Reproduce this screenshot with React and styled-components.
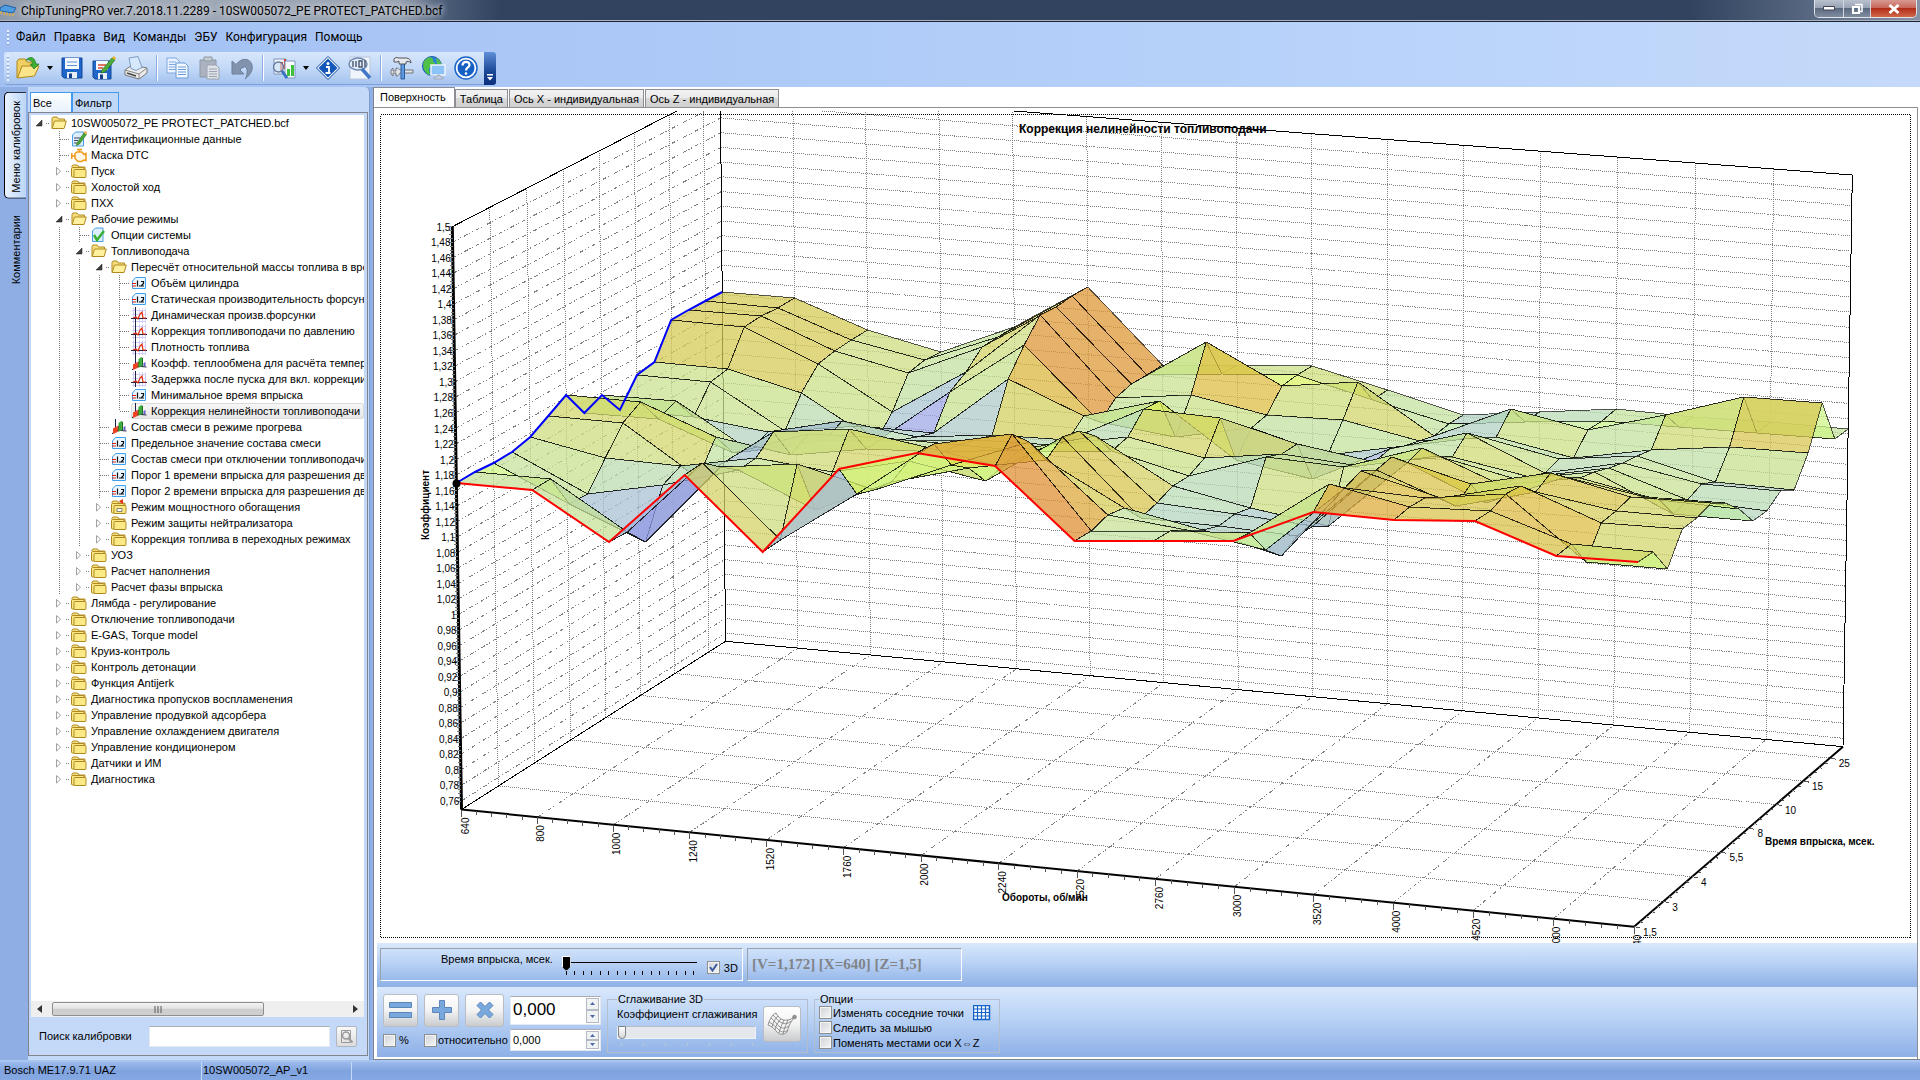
import React, { useState } from "react";
import styled, { createGlobalStyle, css } from "styled-components";

const UI_FONT = `"Liberation Sans", Arial, sans-serif`;
const MENU_FONT = `Roboto, "Noto Sans", sans-serif`;

const GlobalStyle = createGlobalStyle`
    * { box-sizing: border-box; }
    body {
        margin: 0;
        background: #8eb0e6;
        font-family: ${UI_FONT};
        font-size: 11px;
        color: #000;
    }
    button, input { font-family: inherit; font-size: inherit; color: inherit; }
`;

/* ---------- window frame ---------- */

const Window = styled.div`
    display: flex;
    flex-direction: column;
    min-height: 100vh;
`;

const TitleBar = styled.header`
    display: flex;
    align-items: flex-start;
    justify-content: space-between;
    height: 22px;
    background: linear-gradient(90deg, #8e99aa 0, #a3abb8 60px, #98a2b1 400px, #4b5c77 445px, #31435f 500px, #31435f 88%, #566680 94%, #8792a5 100%);
    border-bottom: 1px solid #1c2434;
    box-shadow: inset 0 -1px 0 #a9b2c2;
    overflow: hidden;
`;

const Caption = styled.h1`
    display: flex;
    align-items: center;
    gap: 5px;
    margin: 0;
    height: 21px;
    font-family: ${MENU_FONT};
    font-size: 12px;
    font-weight: normal;
    white-space: nowrap;
    text-shadow: 0 0 6px #d5d9e0, 0 0 6px #d5d9e0;
`;

const Controls = styled.div`
    display: flex;
    margin-right: 3px;
    border: 1px solid #dfe3ea;
    border-top: 0;
    border-radius: 0 0 5px 5px;
    overflow: hidden;
`;

const ControlButton = styled.button`
    display: flex;
    align-items: center;
    justify-content: center;
    width: ${(p) => p.$width}px;
    height: 17px;
    padding: 0;
    border: 0;
    border-left: ${(p) => (p.$first ? "0" : "1px solid #d3d8e0")};
    background: ${(p) => p.$close
        ? "linear-gradient(#d79a92 0, #c8685a 45%, #b22d18 50%, #d0684c 100%)"
        : "linear-gradient(#b9c1ce 0, #98a3b4 45%, #5c6a80 50%, #7f8ca0 100%)"};
`;

const Bars = styled.div`
    background: linear-gradient(90deg, #a2c0f4 0, #aecaf7 40%, #b9d3fa 72%, #c5dafa 100%);
    padding: 0 4px 2px;
`;

const MenuBar = styled.nav`
    display: flex;
    align-items: center;
    gap: 8px;
    height: 30px;
    padding-left: 3px;
    font-family: ${MENU_FONT};
    font-size: 12px;
`;

const MenuLink = styled.a`
    color: #000;
    text-decoration: none;
`;

const Grip = styled.span`
    width: 2px;
    height: ${(p) => p.$height}px;
    margin-right: ${(p) => p.$gap}px;
    background: repeating-linear-gradient(#eef4ff 0, #eef4ff 2px, #86a2d4 2px, #86a2d4 3px, transparent 3px, transparent 4px);
`;

const ToolBar = styled.div`
    display: inline-flex;
    align-items: center;
    height: 33px;
    padding-left: 3px;
    border-radius: 3px;
    background: linear-gradient(#d7e6fb 0, #c3d9f8 50%, #a5c3ee 100%);
    border-bottom: 1px solid #7f9fd6;
`;

const ToolButton = styled.button`
    display: flex;
    align-items: center;
    justify-content: center;
    width: ${(p) => (p.$narrow ? 12 : 32)}px;
    height: 30px;
    padding: 0;
    border: 0;
    background: none;
`;

const ToolSeparator = styled.span`
    width: 2px;
    height: 26px;
    margin: 0 4px;
    border-left: 1px solid #8caee2;
    border-right: 1px solid #fff;
`;

const ToolEnd = styled.button`
    display: flex;
    align-items: flex-end;
    justify-content: center;
    width: 12px;
    height: 33px;
    margin-left: 2px;
    padding: 0 0 4px;
    border: 0;
    border-radius: 0 3px 3px 0;
    background: linear-gradient(#5f8fd8, #1a4796 60%, #0b2f7c);
`;

/* ---------- main area ---------- */

const Main = styled.main`
    display: flex;
    flex: 1;
    align-items: stretch;
`;

const SideStrip = styled.div`
    display: flex;
    flex-direction: column;
    gap: 8px;
    width: 28px;
    padding: 5px 2px 0 4px;
    background: #8eaee4;
`;

const SideTab = styled.button`
    writing-mode: vertical-rl;
    transform: rotate(180deg);
    padding: 5px 3px 8px 2px;
    border: 0;
    text-align: left;
    white-space: nowrap;
    background: none;
    ${(p) => p.$active && css`
        background: linear-gradient(270deg, #eaf3fe, #bcd5f6);
        border: 1px solid #000;
        border-left: 0;
        border-radius: 0 5px 5px 0;
    `}
`;

const LeftPane = styled.section`
    display: flex;
    flex-direction: column;
    flex: 0 0 342px;
    min-width: 0;
    padding: 5px 1px 4px 0;
    background: #c4d9f8;
    border-radius: 0 5px 0 0;
    border-right: 1px solid #7f9bcb;
`;

const FilterTabs = styled.div`
    display: flex;
    height: 20px;
    padding-left: 2px;
`;

const FilterTab = styled.button`
    width: ${(p) => p.$width}px;
    padding: 0 2px;
    border: 1px solid #4299ee;
    border-bottom: 0;
    text-align: left;
    background: ${(p) => (p.$active ? "linear-gradient(#fff, #e8f1fc)" : "#c0d8f8")};
`;

const TreePanel = styled.div`
    display: flex;
    flex-direction: column;
    flex: 1;
    min-width: 0;
    border: 1px solid #80848c;
`;

const Tree = styled.ul`
    flex: 1;
    margin: 2px 3px 0 2px;
    padding: 0;
    list-style: none;
    background: #fff;
    overflow: hidden;
`;

const TreeRow = styled.li`
    display: flex;
    align-items: stretch;
    height: 16px;
    white-space: nowrap;
`;

const DOTS_V = "repeating-linear-gradient(#777 0, #777 1px, transparent 1px, transparent 2px)";
const DOTS_H = "repeating-linear-gradient(90deg, #777 0, #777 1px, transparent 1px, transparent 2px)";

const Blank = styled.span`
    flex: 0 0 20px;
`;

const Guide = styled.span`
    flex: 0 0 20px;
    background: ${DOTS_V} 8px 0 / 1px 100% no-repeat;
`;

const LeafGuide = styled.span`
    flex: 0 0 20px;
    background:
        ${DOTS_V} 8px 0 / 1px ${(p) => (p.$last ? "8px" : "100%")} no-repeat,
        ${DOTS_H} 9px 8px / 10px 1px no-repeat;
`;

const Expander = styled.button`
    display: flex;
    align-items: center;
    flex: 0 0 20px;
    padding: 0 0 0 5px;
    border: 0;
    background: ${DOTS_H} 15px 8px / 4px 1px no-repeat;
`;

const TreeLabel = styled.span`
    display: flex;
    align-items: center;
    gap: 4px;
    flex: 1 0 auto;
    ${(p) => p.$selected && css`
        background: linear-gradient(#f8f8f8, #e6e6e6);
        box-shadow: inset 0 0 0 1px #dadada;
        border-radius: 3px;
    `}
`;

const HScroll = styled.div`
    display: flex;
    align-items: center;
    height: 16px;
    margin: 0 3px 0 2px;
    padding: 0 6px;
    gap: 10px;
    background: #efefef;
`;

const ScrollThumb = styled.div`
    display: flex;
    align-items: center;
    justify-content: center;
    width: 66%;
    height: 14px;
    margin-right: auto;
    border: 1px solid #8f8f8f;
    border-radius: 2px;
    background: linear-gradient(#f3f3f3 0, #e2e2e2 45%, #cdcdcd 50%, #d0d0d0 100%);
`;

const SearchRow = styled.div`
    display: flex;
    align-items: center;
    height: 38px;
    padding: 0 10px;
    gap: 6px;
`;

const SearchLabel = styled.label`
    flex: 0 0 104px;
    white-space: nowrap;
`;

const SearchInput = styled.input`
    flex: 1;
    min-width: 0;
    height: 21px;
    border: 1px solid #e3e9ef;
    border-top-color: #abadb3;
    background: #fff;
`;

const SearchButton = styled.button`
    display: flex;
    align-items: center;
    justify-content: center;
    width: 21px;
    height: 21px;
    padding: 0;
    border: 1px solid #b0b6be;
    border-radius: 2px;
    background: linear-gradient(#fafafa, #dcdcdc);
`;

const RightPane = styled.section`
    display: flex;
    flex-direction: column;
    flex: 1;
    min-width: 0;
    margin-left: 3px;
    border-left: 1px solid #80848c;
    border-bottom: 1px solid #80848c;
    background: #fff;
`;

const PageTabs = styled.div`
    display: flex;
    align-items: flex-end;
    height: 21px;
`;

const PageTab = styled.button`
    height: 19px;
    padding: 0 4px;
    border: 1px solid #8c8e94;
    border-left-width: ${(p) => (p.$active ? 0 : 1)}px;
    background: linear-gradient(#f2f2f2 0, #ebebeb 50%, #dadada 50%, #cfcfcf 100%);
    white-space: nowrap;
    margin-right: 1px;
    ${(p) => p.$active && css`
        align-self: stretch;
        height: 21px;
        padding: 0 8px 2px 6px;
        margin-right: 0;
        border-bottom-color: #fff;
        background: #fff;
    `}
`;

const Page = styled.div`
    display: flex;
    flex-direction: column;
    flex: 1;
    margin-right: 2px;
    padding: 3px 0 2px 3px;
    border-top: 1px solid #8c8e94;
    border-right: 1px solid #8c8e94;
    margin-top: -1px;
`;

const ChartSvg = styled.svg`
    display: block;
    width: 100%;
    height: auto;
    background: #fff;
    font-size: 10px;
`;

const Band = styled.div`
    display: flex;
    align-items: flex-start;
    gap: ${(p) => p.$gap}px;
    min-height: ${(p) => p.$height}px;
    flex: ${(p) => (p.$grow ? 1 : "0 0 auto")};
    padding: ${(p) => p.$pad};
    background: linear-gradient(#d9e8fc 0, #b9d2f5 45%, #8db0e6 100%);
`;

const Bevel = styled.div`
    display: flex;
    align-items: ${(p) => p.$align};
    height: 33px;
    width: ${(p) => p.$width}px;
    padding: ${(p) => p.$pad};
    border: 1px solid;
    border-color: #98a0ac #fff #fff #98a0ac;
`;

const Readout = styled.output`
    font-family: "Liberation Serif", "Times New Roman", serif;
    font-size: 15px;
    font-weight: bold;
    color: #808488;
    white-space: pre;
`;

const ZLabel = styled.label`
    flex: 0 0 110px;
    line-height: 14px;
    white-space: nowrap;
`;

const ZSliderBox = styled.div`
    display: flex;
    flex-direction: column;
    width: 137px;
    margin: 4px 8px 0 9px;
`;

const ZSlider = styled.input`
    appearance: none;
    width: 100%;
    height: 15px;
    margin: 0;
    background: linear-gradient(#000, #000) 5px 6px / 130px 1px no-repeat;
    &::-webkit-slider-thumb {
        appearance: none;
        width: 9px;
        height: 15px;
        background: #000;
        border: 1px solid #fff;
        clip-path: polygon(0 0, 100% 0, 100% 70%, 50% 100%, 0 70%);
    }
`;

const CheckLabel = styled.label`
    display: flex;
    align-items: center;
    gap: ${(p) => p.$gap || 1}px;
    height: 15px;
    margin-top: ${(p) => p.$top || 0}px;
    white-space: nowrap;
`;

const Check = styled.input`
    appearance: none;
    flex: 0 0 13px;
    width: 13px;
    height: 13px;
    margin: 0;
    border: 1px solid #8e8f8f;
    background: linear-gradient(135deg, #cfd3d8, #f6f6f6);
    box-shadow: inset 0 0 0 1px #f4f4f4;
    &:checked {
        background: url("data:image/svg+xml,%3Csvg xmlns='http://www.w3.org/2000/svg' viewBox='0 0 11 11'%3E%3Cpath d='M2 5l2.5 3.5L9 2' fill='none' stroke='%233c5a9c' stroke-width='2'/%3E%3C/svg%3E"), linear-gradient(135deg, #cfd3d8, #f6f6f6);
    }
`;

const EditGrid = styled.div`
    display: grid;
    grid-template-columns: 35px 35px 39px 91px;
    grid-template-rows: 34px 22px;
    gap: 2px 6px;
    align-items: center;
`;

const BigButton = styled.button`
    display: flex;
    align-items: center;
    justify-content: center;
    width: 100%;
    height: ${(p) => p.$height || 33}px;
    padding: 0;
    border: 1px solid #b9bcc2;
    border-radius: 3px;
    background: linear-gradient(#fff 0, #f3f3f3 50%, #c9cbce 100%);
`;

const WideCheck = styled(CheckLabel)`
    grid-column: 2 / 4;
`;

const SpinBox = styled.div`
    display: flex;
    align-items: stretch;
    height: ${(p) => p.$height}px;
    padding: 1px;
    border: 1px solid #e3e9ef;
    border-top-color: #abadb3;
    background: #fff;
`;

const SpinInput = styled.input`
    flex: 1;
    min-width: 0;
    padding: 0 1px;
    border: 0;
    background: none;
    font-size: ${(p) => p.$size}px;
`;

const SpinButtons = styled.div`
    display: flex;
    flex-direction: column;
    width: 13px;
`;

const SpinButton = styled.button`
    display: flex;
    align-items: center;
    justify-content: center;
    flex: 1;
    min-height: 0;
    padding: 0;
    border: 1px solid #b4bac4;
    background: #f1f2f4;
`;

const Group = styled.fieldset`
    display: flex;
    align-items: flex-start;
    gap: 6px;
    width: ${(p) => p.$width}px;
    min-width: 0;
    height: 60px;
    margin: 0;
    padding: ${(p) => p.$pad};
    border: 1px solid #b4bfcd;
`;

const Legend = styled.legend`
    padding: 0 1px;
    line-height: 12px;
`;

const Column = styled.div`
    display: flex;
    flex-direction: column;
    flex: 1;
    min-width: 0;
`;

const SmoothLabel = styled.label`
    line-height: 16px;
    margin-bottom: 4px;
    white-space: nowrap;
`;

const SmoothSlider = styled.input`
    appearance: none;
    width: 139px;
    height: 13px;
    margin: 0;
    border: 1px solid #eef1f5;
    border-top-color: #b5bcc6;
    background: #e4e8ec;
    &::-webkit-slider-thumb {
        appearance: none;
        width: 8px;
        height: 13px;
        border: 1px solid #7e8288;
        border-radius: 1px 1px 4px 4px;
        background: linear-gradient(#fff, #d8d8d8);
    }
`;

const MeshCell = styled.div`
    flex: 0 0 38px;
`;

const StatusBar = styled.footer`
    display: flex;
    height: 20px;
    border-top: 2px solid #a8c4f0;
    background: linear-gradient(#9cbaec 0, #7fa3df 50%, #86a9e3 100%);
    line-height: 17px;
`;

const StatusCell = styled.span`
    width: ${(p) => p.$width}px;
    padding-left: ${(p) => p.$pad}px;
    border-right: 1px solid #c5d8f6;
    white-space: nowrap;
`;

/* ---------- tree icons ---------- */

function TreeIcon({ kind }) {
    const box = { width: 16, height: 16, viewBox: "0 0 16 16", "aria-hidden": true };
    if (kind === "open") {
        return (
            <svg {...box}>
                <path d="M1 13.500V3.500l1-1.500h4l1.500 2H13.500V6" fill="#f6df7c" stroke="#b08a20" />
                <path d="M1.200 13.500L3.500 6h11.800l-2.200 7.500z" fill="#fff0a0" stroke="#b08a20" />
            </svg>
        );
    }
    if (kind === "folder" || kind === "marked") {
        return (
            <svg {...box}>
                <path d="M.500 4l1.500-2h4.500l1.500 2h6v3" fill="#f6e07c" stroke="#b08a20" />
                <rect x=".500" y="4.500" width="12.500" height="9.500" rx="1" fill="#f8e684" stroke="#b08a20" />
                <rect x="3" y="6.500" width="12" height="8" rx="1" fill="#fbe985" stroke="#b08a20" />
                {kind === "marked" && <path d="M6 9.500h5v3H6z" fill="#fff" stroke="#555" strokeWidth=".7" />}
                {kind === "marked" && <path d="M8 2l4-2v5l-2-1z" fill="#e03a20" />}
            </svg>
        );
    }
    if (kind === "value") {
        return (
            <svg {...box}>
                <path d="M1.500 13.500V6l3-3.500h10v11z" fill="#eaf6ff" stroke="#3fa0ee" />
                <path d="M1 8.500h4M1 11h4" stroke="#e02010" strokeWidth="1.200" />
                <path d="M6.500 5.500v6M8.500 10.500v1M10 6.500h2.500v2l-2.500 2.500h3" fill="none" stroke="#111" strokeWidth="1.200" />
            </svg>
        );
    }
    if (kind === "curve") {
        return (
            <svg {...box}>
                <path d="M1 3.500h14M1 7.500h14M1 14.500h14M2.500 1v15M8.500 1v15M11.500 1v15M14.500 1v15" stroke="#d0d0f8" />
                <path d="M4.500 0v16M0 11.500h16" stroke="#20204a" />
                <path d="M2 11l3-1 2 2 2-5 2-2 1 6h3" fill="none" stroke="#e83010" strokeWidth="1.200" />
            </svg>
        );
    }
    if (kind === "map") {
        return (
            <svg {...box}>
                <path d="M4.500 0v11L1 15M4.500 11l11 1" stroke="#20204a" fill="none" />
                <path d="M2 9.500l4.500-2.500v6L2 15z" fill="#f04020" />
                <path d="M6.500 7v6l1.500-1V6.500z" fill="#a02010" />
                <path d="M7.500 4l3-2v9l-3 2z" fill="#30b030" />
                <path d="M10.500 2l1.500 1v8l-1.500 1z" fill="#187018" />
                <path d="M12.500 8l2-1v4h-2z" fill="#6060c8" />
            </svg>
        );
    }
    if (kind === "check") {
        return (
            <svg {...box}>
                <path d="M1.500 14.500V4l3-3h7.500v13.500z" fill="#dceefc" stroke="#4aa0e8" />
                <path d="M3 8l3 5 7-9" fill="none" stroke="#38b030" strokeWidth="2.500" />
            </svg>
        );
    }
    if (kind === "edit") {
        return (
            <svg {...box}>
                <path d="M1.500 15V4l3-3h8v14z" fill="#dceefc" stroke="#4aa0e8" />
                <path d="M3 7h7M3 9.500h4M3 12h3" stroke="#446" />
                <path d="M6 12l7-10 2.500 1.500L8.500 13l-3 1.500z" fill="#48a838" stroke="#2b6a20" strokeWidth=".6" />
                <path d="M12.500 1.500l3 2 .5-2.500-2-1z" fill="#f0b050" />
            </svg>
        );
    }
    return (
        <svg {...box}>
            <path d="M.800 6v6M1 9h2.500M4 6.500l2-1.500h5l2 2.500 2-1v7l-2-.500-2.500 1.500H7l-3-3zM6 2.500h5M8.500 2.500V5" fill="#fff8e8" stroke="#f09a1a" strokeWidth="1.500" />
        </svg>
    );
}

/* ---------- toolbar icons ---------- */

const ICONS = {
    open: (
        <>
            <path d="M1 22V5l2-2h6l2 3h8v4" fill="#f0cf62" stroke="#b18718" />
            <path d="M1.500 22L6 10h17l-4.500 10z" fill="#fbe48a" stroke="#b18718" />
            <path d="M10 4c5-5 9-2 10 4h3l-5 5-4-5h3c-1-3-3-5-7-4z" fill="#3fae35" stroke="#1d7a1d" strokeWidth=".7" />
        </>
    ),
    save: (
        <>
            <path d="M2 2h20v20H4l-2-2z" fill="#1f66c8" stroke="#0f4799" />
            <path d="M5 2h14v11H5z" fill="#f4f9ff" />
            <path d="M7 6h10M7 9.500h10" stroke="#5a90d8" />
            <path d="M7 16h10v6H7z" fill="#e8eef6" />
            <path d="M9 17.500h3V22H9z" fill="#123f88" />
        </>
    ),
    saveEdit: (
        <>
            <path d="M1 5h18v18H3l-2-2z" fill="#1f66c8" stroke="#0f4799" />
            <path d="M4 5h12v9H4z" fill="#f4f9ff" />
            <path d="M6 9h8M6 12h5" stroke="#d84a30" strokeWidth="1.500" />
            <path d="M6 17h9v6H6z" fill="#e8eef6" />
            <path d="M8 18.500h3V23H8z" fill="#123f88" />
            <path d="M10 14L20 2l3 2-10 12-4 1z" fill="#4fae3b" stroke="#2c6e20" strokeWidth=".7" />
            <path d="M20 2l1.500-2L24 2l-1 2z" fill="#e8b030" />
        </>
    ),
    print: (
        <>
            <path d="M1 14l7-5 15 3v5l-8 6-14-4z" fill="#ececec" stroke="#777" />
            <path d="M1 14l14 4 8-6M15 18v5" fill="none" stroke="#888" />
            <path d="M5 2l9-1.500 4 11-6 3-5-2z" fill="#d6e8fb" stroke="#7f9cc4" />
            <path d="M3 17l9 3" stroke="#444" strokeWidth="1.500" />
        </>
    ),
    copy: (
        <>
            <path d="M1 2h9l3 3v12H1z" fill="#eaf3ff" stroke="#7fa8dc" />
            <path d="M3 6h7M3 8.500h7M3 11h7M3 13.500h7" stroke="#7fa8dc" />
            <path d="M10 7h9l3 3v12H10z" fill="#f4f9ff" stroke="#6b9ad8" />
            <path d="M12 11h8M12 13.500h8M12 16h8M12 18.500h8" stroke="#6b9ad8" />
        </>
    ),
    paste: (
        <>
            <path d="M2 4h16v17H2z" fill="#aab3bf" stroke="#8d97a5" />
            <path d="M6 1h8v4H6z" fill="#c8cdd4" stroke="#8d97a5" />
            <path d="M9 9h9l3 3v11H9z" fill="#dfe3e8" stroke="#9aa3af" />
            <path d="M11 13h8M11 15.500h8M11 18h8M11 20.500h8" stroke="#9aa3af" />
        </>
    ),
    undo: <path d="M2 5v13h12l-4-4c4-5 8-4 7 3 0 3-1 5-2 6 6-5 8-9 7-14-2-7-10-8-16-.500z" fill="#8193ad" stroke="#6d7f9a" />,
    chartSearch: (
        <>
            <path d="M2 3h12v15H2z" fill="#f2f6fc" stroke="#7b94bd" />
            <path d="M8 6h3v9H8zM12 3h2v10h-2z" fill="#e04028" />
            <path d="M13 5h10v17H13z" fill="#f8fbff" stroke="#7b94bd" />
            <path d="M15 13h3v7h-3zM19 9h3v11h-3z" fill="#3fc03a" />
            <circle cx="6.500" cy="11" r="5" fill="#cfe2f8" fillOpacity=".7" stroke="#667a99" strokeWidth="1.300" />
            <path d="M10 15l5 7" stroke="#3870c0" strokeWidth="3" />
        </>
    ),
    info: (
        <>
            <path d="M12 .500L23.500 12 12 23.500.500 12z" fill="#fff" stroke="#0e4597" />
            <path d="M12 2.500L21.500 12 12 21.500 2.500 12z" fill="#1358b8" />
            <circle cx="12" cy="7.500" r="1.500" fill="#fff" />
            <path d="M10 11h3v6M9.500 17h5" fill="none" stroke="#fff" strokeWidth="1.800" />
        </>
    ),
    binary: (
        <>
            <path d="M2 1h20v22H2z" fill="#f0f5fc" stroke="#b8c6dc" />
            <ellipse cx="10" cy="8" rx="9" ry="6" fill="#e4effb" stroke="#6f89b0" strokeWidth="1.500" />
            <path d="M5 5v6M8 5v6M11 5h3v6h-3zM17 4v7" fill="none" stroke="#48566e" strokeWidth="1.400" />
            <path d="M14 13l8 9" stroke="#3f78c8" strokeWidth="3.500" />
        </>
    ),
    tools: (
        <>
            <path d="M1 14l2-2v3h3v-3c2 0 3 1 4 2h13v3H10c-1 2-2 3-4 3v-3H3v3l-2-2z" fill="#dfe3ea" stroke="#777" />
            <path d="M11 7h3.500v16H11z" fill="#5f9ae0" stroke="#285a9c" />
            <path d="M4 3c1-1.500 3-2 4-1h8c3 0 5 2 5 5-2-2-4-2-5-1v2H9V5L7 6H4z" fill="#e6e9ee" stroke="#555" />
        </>
    ),
    globe: (
        <>
            <circle cx="10" cy="10" r="9.500" fill="#2c7fd8" stroke="#1c5aa8" />
            <path d="M3 4c4-4 8-3 8 0s3 2 2 5-6 1-6 4 2 5 0 6C2 16-1 9 3 4z" fill="#4fc048" />
            <path d="M14 2c3 1 5 4 5.500 7L15 8z" fill="#4fc048" />
            <path d="M9 9h14v10H9z" fill="#8cc4f8" stroke="#eef3fa" strokeWidth="1.500" />
            <path d="M15 19h3v2h3v2h-9v-2h3z" fill="#c8d2e0" stroke="#7c8ba3" strokeWidth=".5" />
        </>
    ),
    help: (
        <>
            <circle cx="12" cy="12" r="11" fill="#fff" stroke="#1d66c8" strokeWidth="1.500" />
            <circle cx="12" cy="12" r="8.500" fill="#1660c4" />
            <path d="M8.500 9.500c0-5 7-4.500 7-.500 0 2.500-3.500 2.500-3.500 5.500" fill="none" stroke="#fff" strokeWidth="2.200" />
            <circle cx="12" cy="17.500" r="1.300" fill="#fff" />
        </>
    ),
};

const Caret = () => (
    <svg width="6" height="4" viewBox="0 0 6 4" aria-hidden="true"><path d="M0 0h6L3 4z" /></svg>
);

function Tool({ icon, label }) {
    return (
        <ToolButton type="button" aria-label={label}>
            <svg width="24" height="24" viewBox="0 0 24 24" aria-hidden="true">{ICONS[icon]}</svg>
        </ToolButton>
    );
}

/* ---------- data ---------- */

const TREE = [
    [0, "open", "10SW005072_PE PROTECT_PATCHED.bcf"],
    [1, "edit", "Идентификационные данные"],
    [1, "engine", "Маска DTC"],
    [1, "folder", "Пуск"],
    [1, "folder", "Холостой ход"],
    [1, "folder", "ПХХ"],
    [1, "open", "Рабочие режимы"],
    [2, "check", "Опции системы"],
    [2, "open", "Топливоподача"],
    [3, "open", "Пересчёт относительной массы топлива в время"],
    [4, "value", "Объём цилиндра"],
    [4, "value", "Статическая производительность форсунки"],
    [4, "curve", "Динамическая произв.форсунки"],
    [4, "curve", "Коррекция топливоподачи по давлению"],
    [4, "curve", "Плотность топлива"],
    [4, "map", "Коэфф. теплообмена для расчёта температуры"],
    [4, "curve", "Задержка после пуска для вкл. коррекции"],
    [4, "value", "Минимальное время впрыска"],
    [4, "map", "Коррекция нелинейности топливоподачи", true],
    [3, "map", "Состав смеси в режиме прогрева"],
    [3, "value", "Предельное значение состава смеси"],
    [3, "value", "Состав смеси при отключении топливоподачи"],
    [3, "value", "Порог 1 времени впрыска для разрешения двойного"],
    [3, "value", "Порог 2 времени впрыска для разрешения двойного"],
    [3, "marked", "Режим мощностного обогащения"],
    [3, "folder", "Режим защиты нейтрализатора"],
    [3, "folder", "Коррекция топлива в переходных режимах"],
    [2, "folder", "УОЗ"],
    [2, "folder", "Расчет наполнения"],
    [2, "folder", "Расчет фазы впрыска"],
    [1, "folder", "Лямбда - регулирование"],
    [1, "folder", "Отключение топливоподачи"],
    [1, "folder", "E-GAS, Torque model"],
    [1, "folder", "Круиз-контроль"],
    [1, "folder", "Контроль детонации"],
    [1, "folder", "Функция Antijerk"],
    [1, "folder", "Диагностика пропусков воспламенения"],
    [1, "folder", "Управление продувкой адсорбера"],
    [1, "folder", "Управление охлаждением двигателя"],
    [1, "folder", "Управление кондиционером"],
    [1, "folder", "Датчики и ИМ"],
    [1, "folder", "Диагностика"],
];

const RPM = [640, 800, 1000, 1240, 1520, 1760, 2000, 2240, 2520, 2760, 3000, 3520, 4000, 4520, 5000, 6040];
const Z_LABELS = ["1,5", "3", "4", "5,5", "8", "10", "15", "25"];

// one array per rpm column, from the front edge to the back edge
const NODES = [
    [483, 472, 463, 452, 437, 416, 395, 413, 395, 410, 375, 362, 320, 310, 301, 292],
    [490, 479, 504, 494, 458, 423, 402, 419, 401, 417, 382, 369, 327, 316, 308, 298],
    [542, 532, 542, 485, 466, 478, 437, 453, 451, 432, 431, 393, 364, 351, 340, 330],
    [475, 463, 467, 470, 458, 432, 455, 434, 440, 421, 426, 442, 412, 373, 360, 352],
    [552, 540, 464, 510, 472, 429, 449, 438, 440, 437, 433, 392, 372, 347, 337, 327],
    [469, 494, 490, 482, 461, 447, 452, 445, 440, 435, 379, 345, 315, 307, 296, 287],
    [453, 444, 465, 468, 481, 467, 450, 452, 445, 440, 416, 422, 398, 384, 375, 365],
    [466, 434, 442, 460, 437, 431, 436, 451, 437, 409, 401, 437, 395, 342, 374, 365],
    [541, 531, 515, 508, 518, 503, 486, 476, 458, 418, 460, 428, 415, 386, 375, 366],
    [541, 531, 530, 530, 526, 514, 508, 457, 454, 444, 479, 455, 420, 382, 400, 390],
    [541, 533, 550, 556, 536, 526, 526, 467, 466, 462, 449, 446, 441, 436, 424, 415],
    [512, 484, 488, 471, 470, 457, 463, 448, 456, 457, 433, 437, 437, 409, 422, 412],
    [520, 507, 498, 498, 506, 484, 503, 485, 479, 477, 473, 459, 458, 430, 421, 409],
    [521, 511, 494, 486, 492, 473, 477, 478, 472, 468, 463, 456, 450, 415, 427, 417],
    [556, 544, 562, 523, 511, 497, 497, 500, 514, 500, 484, 482, 447, 397, 433, 422],
    [562, 552, 569, 529, 518, 503, 503, 509, 521, 511, 491, 490, 453, 403, 439, 429],
];

const PALETTE = [
    [1.07, 160, 166, 232],
    [1.098, 184, 190, 238],
    [1.115, 188, 204, 228],
    [1.127, 192, 212, 220],
    [1.145, 200, 224, 208],
    [1.158, 206, 230, 196],
    [1.17, 213, 234, 178],
    [1.185, 217, 232, 164],
    [1.2, 222, 226, 148],
    [1.223, 224, 216, 130],
    [1.24, 229, 206, 116],
    [1.255, 230, 192, 110],
    [1.272, 230, 177, 106],
    [1.3, 228, 160, 100],
];

/* ---------- projection ---------- */

// maps the unit square onto the quad p00, p10, p11, p01
function squareToQuad([x0, y0], [x1, y1], [x2, y2], [x3, y3]) {
    const sx = x0 - x1 + x2 - x3;
    const sy = y0 - y1 + y2 - y3;
    const dx1 = x1 - x2, dx2 = x3 - x2;
    const dy1 = y1 - y2, dy2 = y3 - y2;
    const den = dx1 * dy2 - dx2 * dy1;
    const g = (sx * dy2 - dx2 * sy) / den;
    const h = (dx1 * sy - sx * dy1) / den;
    return (u, v) => {
        const w = g * u + h * v + 1;
        return [
            ((x1 - x0 + g * x1) * u + (x3 - x0 + h * x3) * v + x0) / w,
            ((y1 - y0 + g * y1) * u + (y3 - y0 + h * y3) * v + y0) / w,
        ];
    };
}

const N = 15;
const V_TOP = 1.5;
const V_BOTTOM = 0.749;
const floor = squareToQuad([461.5, 809.5], [1634, 926.7], [1843, 746.7], [725.5, 641.3]);
const roof = squareToQuad([452.3, 226.7], [1641, 325], [1852.3, 175], [720.3, 88.5]);

const lerp = (a, b, t) => a + (b - a) * t;
const fmt = (n) => n.toFixed(1);
const pts = (list) => list.map(([x, y]) => `${fmt(x)},${fmt(y)}`).join(" ");

function at(i, j, value) {
    const f = floor(i / N, j / N);
    const r = roof(i / N, j / N);
    const t = (value - V_BOTTOM) / (V_TOP - V_BOTTOM);
    return [lerp(f[0], r[0], t), lerp(f[1], r[1], t)];
}

function node(i, j) {
    const f = floor(i / N, j / N);
    const r = roof(i / N, j / N);
    const y = NODES[i][j];
    const t = (f[1] - y) / (f[1] - r[1]);
    return { x: lerp(f[0], r[0], t), y, value: lerp(V_BOTTOM, V_TOP, t) };
}

const FOLD_SHIFT = [10, 20, -24];

function tint(value, folded) {
    let k = PALETTE.findIndex((stop) => stop[0] > value);
    if (k === -1) k = PALETTE.length - 1;
    if (k === 0) k = 1;
    const a = PALETTE[k - 1];
    const b = PALETTE[k];
    const t = Math.min(1, Math.max(0, (value - a[0]) / (b[0] - a[0])));
    const rgb = [0, 1, 2].map((c) => {
        const base = (lerp(a[c + 1], b[c + 1], t) - 64) / 0.75 + (folded ? FOLD_SHIFT[c] : 0);
        return Math.round(Math.min(255, Math.max(0, base)));
    });
    return `rgb(${rgb.join(",")})`;
}

function area(list) {
    return list.reduce((sum, p, k) => {
        const q = list[(k + 1) % list.length];
        return sum + p.x * q.y - q.x * p.y;
    }, 0);
}

const GRID = NODES.map((col, i) => col.map((_, j) => node(i, j)));

const CELLS = [];
for (let j = N - 1; j >= 0; j--) {
    for (let i = 0; i < N; i++) {
        const corners = [GRID[i][j], GRID[i + 1][j], GRID[i + 1][j + 1], GRID[i][j + 1]];
        const value = GRID[i][j + 1].value;
        CELLS.push({
            key: `${i}-${j}`,
            points: pts(corners.map((c) => [c.x, c.y])),
            fill: tint(value, area(corners) > 0 && value > 1.14),
        });
    }
}

const VALUES = Array.from({ length: 38 }, (_, k) => Math.round((1.5 - k * 0.02) * 100) / 100);

function SurfaceChart() {
    const redLine = pts(GRID.map((col) => [col[0].x, col[0].y]));
    const blueLine = pts(GRID[0].map((n) => [n.x, n.y]));
    const odd = [2, 4, 6, 8, 10, 12, 14];
    const cols = Array.from({ length: 16 }, (_, i) => i);
    const seg = (a, b, key) => <path key={key} d={`M${fmt(a[0])} ${fmt(a[1])}L${fmt(b[0])} ${fmt(b[1])}`} />;

    return (
        <ChartSvg viewBox="377 111 1540 832" role="img" aria-label="Коррекция нелинейности топливоподачи">
            <rect x="380.5" y="114.5" width="1530" height="823" fill="none" stroke="#000" strokeDasharray="1 1" shapeRendering="crispEdges" />
            <g stroke="#808080" fill="none" strokeDasharray="1 1" shapeRendering="crispEdges">
                {VALUES.slice(1).map((v) => seg(at(0, N, v), at(N, N, v), `b${v}`))}
                {cols.slice(1, 15).map((i) => seg(floor(i / N, 1), roof(i / N, 1), `bv${i}`))}
                {odd.map((j) => seg(floor(0, j / N), roof(0, j / N), `lv${j}`))}
            </g>
            <g stroke="#808080" fill="none" strokeDasharray="4 2 1 2 1 3" shapeRendering="crispEdges">
                {VALUES.slice(1).map((v) => seg(at(0, 0, v), at(0, N, v), `l${v}`))}
                {cols.slice(1, 15).map((i) => seg(floor(i / N, 0), floor(i / N, 1), `fv${i}`))}
            </g>
            <g stroke="#808080" fill="none" strokeDasharray="1 1" shapeRendering="crispEdges">
                {odd.map((j) => seg(floor(0, j / N), floor(1, j / N), `fh${j}`))}
            </g>

            <g stroke="#000" fill="none" shapeRendering="crispEdges">
                {seg(roof(0, 0), roof(0, 1), "tl")}
                {seg([1014, 111], roof(1, 1), "tb")}
                {seg(roof(0, 1), floor(0, 1), "vb")}
                {seg(roof(1, 1), floor(1, 1), "vr")}
                {seg(floor(0, 0), floor(0, 1), "fl")}
                {seg(floor(0, 1), floor(1, 1), "fb")}
            </g>
            <g stroke="#000" fill="none" strokeWidth="2">
                {seg(floor(0, 0), floor(1, 0), "ax")}
                {seg(floor(1, 0), floor(1, 1), "az")}
            </g>
            <path d={`M${pts([roof(0, 0)])}L${pts([floor(0, 0)])}`} stroke="#000" strokeWidth="3" />

            <g stroke="#555" shapeRendering="crispEdges">
                {Array.from({ length: 76 }, (_, k) => {
                    const [x, y] = floor(k / 75, 0);
                    return seg([x, y], [x, y + (k % 5 ? 4 : 7)], k);
                })}
                {Array.from({ length: 36 }, (_, k) => {
                    const [x, y] = floor(1, (k * 0.4) / N);
                    return seg([x, y], [x + (k % 5 ? 3 : 6), y + 1], `z${k}`);
                })}
            </g>
            <g stroke="#777" shapeRendering="crispEdges">
                {Array.from({ length: 149 }, (_, k) => {
                    const [x, y] = at(0, 0, 1.5 - k * 0.005);
                    return seg([x - (k % 4 ? 3 : 5), y], [x, y], `y${k}`);
                })}
            </g>

            <g stroke="#000" strokeOpacity=".65" shapeRendering="crispEdges" strokeLinejoin="bevel">
                {CELLS.map((c) => <polygon key={c.key} points={c.points} fill={c.fill} fillOpacity=".75" />)}
            </g>

            <polyline points={blueLine} fill="none" stroke="#00f" strokeWidth="2" />
            <polyline points={redLine} fill="none" stroke="#f00" strokeWidth="2" />
            <circle cx="456.500" cy="483.500" r="4" />

            <g textAnchor="end">
                {VALUES.map((v) => {
                    const [x, y] = at(0, 0, v);
                    return <text key={v} x={fmt(x - 2)} y={fmt(y + 4)}>{String(v).replace(".", ",")}</text>;
                })}
                {RPM.map((rpm, i) => {
                    const [x, y] = floor(i / N, 0);
                    return <text key={rpm} transform={`translate(${fmt(x + 7)} ${fmt(y + 8)}) rotate(-90)`}>{rpm}</text>;
                })}
            </g>
            {Z_LABELS.map((label, k) => {
                const [x, y] = floor(1, (2 * k) / N);
                return <text key={label} x={fmt(x + 9)} y={fmt(y + 9)}>{label}</text>;
            })}
            <g fontWeight="bold">
                <text x="1019" y="133" fontSize="12">Коррекция нелинейности топливоподачи</text>
                <text x="1002" y="901">Обороты, об/мин</text>
                <text x="1765" y="845">Время впрыска, мсек.</text>
                <text transform="translate(429 540) rotate(-90)">Коэффициент</text>
            </g>
        </ChartSvg>
    );
}

/* ---------- panels ---------- */

function Indent({ depth }) {
    return (
        <>
            <Blank />
            {Array.from({ length: depth - 1 }, (_, k) => <Guide key={k} />)}
        </>
    );
}

function CalibrationTree() {
    return (
        <Tree>
            {TREE.map(([depth, kind, label, selected], n) => {
                const expandable = ["open", "folder", "marked"].includes(kind);
                const next = TREE[n + 1];
                return (
                    <TreeRow key={label}>
                        {depth > 0 && <Indent depth={depth} />}
                        {expandable ? (
                            <Expander type="button" aria-label={label}>
                                <svg width="7" height="9" viewBox="0 0 7 9" aria-hidden="true">
                                    {kind === "open"
                                        ? <path d="M0 7L6 1v6z" fill="#404040" stroke="#222" strokeWidth=".5" />
                                        : <path d="M.500.500v7.500L4.500 4.200z" fill="#fff" stroke="#a0a0a0" />}
                                </svg>
                            </Expander>
                        ) : <LeafGuide $last={!next || next[0] < depth} />}
                        <TreeLabel $selected={selected}>
                            <TreeIcon kind={kind} />
                            {label}
                        </TreeLabel>
                    </TreeRow>
                );
            })}
        </Tree>
    );
}

function Spin({ height, size, label }) {
    const [value, setValue] = useState("0,000");
    return (
        <SpinBox $height={height}>
            <SpinInput $size={size} aria-label={label} value={value} onChange={(e) => setValue(e.target.value)} />
            <SpinButtons>
                <SpinButton type="button" aria-label="+">
                    <svg width="5" height="3" viewBox="0 0 5 3" aria-hidden="true"><path d="M0 3h5L2.500 0z" fill="#4a67a8" /></svg>
                </SpinButton>
                <SpinButton type="button" aria-label="-">
                    <svg width="5" height="3" viewBox="0 0 5 3" aria-hidden="true"><path d="M0 0h5L2.500 3z" fill="#4a67a8" /></svg>
                </SpinButton>
            </SpinButtons>
        </SpinBox>
    );
}

function Mesh() {
    return (
        <MeshCell>
            <BigButton type="button" $height={36} aria-label="Сгладить">
                <svg width="30" height="26" viewBox="0 0 30 26" fill="none" stroke="#777" strokeWidth=".8" aria-hidden="true">
                    <path d="M1 14C3 7 6 3 9 2c4 7 9 10 19 4-4 4-6 8-8 15-3 3-7 3-10 0C7 17 4 15 1 14z" fill="#f4f4f4" />
                    <path d="M2 11c4 2 7 5 10 8s6 2 9 0M4 7c4 3 6 7 9 9s6 1 9-1M6 4c4 4 6 7 9 8s6 1 9-2M5 16c1-5 3-8 6-11M8 19c1-5 3-8 6-11M12 22c1-5 3-8 5-13M16 23c1-5 3-9 5-14" />
                    <circle cx="27.500" cy="6" r="1.800" fill="#999" />
                </svg>
            </BigButton>
        </MeshCell>
    );
}

function BottomPanels() {
    return (
        <>
            <Band $gap={4} $height={44} $pad="5px 3px 6px">
                <Bevel $width={363} $align="flex-start" $pad="3px 0 0 60px">
                    <ZLabel htmlFor="z-pos">Время впрыска, мсек.</ZLabel>
                    <ZSliderBox>
                        <ZSlider id="z-pos" type="range" min="0" max="15" defaultValue="0" />
                        <svg width="137" height="5" viewBox="0 0 137 5" aria-hidden="true" shapeRendering="crispEdges">
                            <path d={Array.from({ length: 16 }, (_, k) => `M${4 + k * 8.5} 0v4`).join("")} stroke="#000" />
                        </svg>
                    </ZSliderBox>
                    <CheckLabel $gap={4} $top={8}>
                        <Check type="checkbox" defaultChecked />
                        3D
                    </CheckLabel>
                </Bevel>
                <Bevel $width={215} $align="center" $pad="0 4px">
                    <Readout>[V=1,172] [X=640] [Z=1,5]</Readout>
                </Bevel>
            </Band>
            <Band $gap={6} $height={70} $pad="6px 6px 4px" $grow>
                <EditGrid>
                    <BigButton type="button" aria-label="=">
                        <svg width="24" height="20" viewBox="0 0 24 20" aria-hidden="true">
                            <path d="M.500 2.500h22v5h-22zM.500 12.500h22v5h-22z" fill="#78a8de" stroke="#5b86ba" />
                        </svg>
                    </BigButton>
                    <BigButton type="button" aria-label="+">
                        <svg width="20" height="20" viewBox="0 0 20 20" aria-hidden="true">
                            <path d="M7.500.500h5v7h7v5h-7v7h-5v-7h-7v-5h7z" fill="#78a8de" stroke="#5b86ba" />
                        </svg>
                    </BigButton>
                    <BigButton type="button" aria-label="×">
                        <svg width="18" height="18" viewBox="0 0 18 18" aria-hidden="true">
                            <path d="M4.500 1L9 5.500 13.500 1 17 4.500 12.500 9l4.500 4.500-3.500 3.500L9 12.500 4.500 17 1 13.500 5.500 9 1 4.500z" fill="#78a8de" stroke="#5b86ba" />
                        </svg>
                    </BigButton>
                    <Spin height={29} size={17} label="Значение" />
                    <CheckLabel $gap={3}><Check type="checkbox" />%</CheckLabel>
                    <WideCheck><Check type="checkbox" />относительно</WideCheck>
                    <Spin height={22} size={11} label="Относительно" />
                </EditGrid>
                <Group $width={201} $pad="1px 6px 0 9px">
                    <Legend>Сглаживание 3D</Legend>
                    <Column>
                        <SmoothLabel htmlFor="smooth">Коэффициент сглаживания</SmoothLabel>
                        <SmoothSlider id="smooth" type="range" min="0" max="6" defaultValue="0" />
                        <svg width="139" height="8" viewBox="0 0 139 8" aria-hidden="true">
                            <path d="M4.500 4v3M26.500 4v3M48.500 4v3M70.500 4v3M92.500 4v3M114.500 4v3M135.500 4v3" stroke="#b9c6da" />
                        </svg>
                    </Column>
                    <Mesh />
                </Group>
                <Group $width={186} $pad="0 8px 0 4px">
                    <Legend>Опции</Legend>
                    <Column>
                        <CheckLabel><Check type="checkbox" />Изменять соседние точки</CheckLabel>
                        <CheckLabel><Check type="checkbox" />Следить за мышью</CheckLabel>
                        <CheckLabel><Check type="checkbox" />Поменять местами оси X⇔Z</CheckLabel>
                    </Column>
                    <svg width="18" height="16" viewBox="0 0 18 16" aria-hidden="true">
                        <path d="M.500.500h16v14h-16z" fill="#fff" stroke="#1463c8" strokeWidth="1.500" />
                        <path d="M4.500 0v15M8.500 0v15M12.500 0v15M0 4h17M0 7.500h17M0 11h17" stroke="#1463c8" strokeWidth="1.200" />
                    </svg>
                </Group>
            </Band>
        </>
    );
}

export default function App() {
    return (
        <Window>
            <GlobalStyle />
            <TitleBar>
                <Caption>
                    <svg width="16" height="14" viewBox="0 0 16 14" aria-hidden="true">
                        <path d="M0 4l5-3 11 3-3 5L0 7z" fill="#4f9be0" stroke="#1d5fa8" />
                        <path d="M1 7v3M4 8v3M7 8.500v3M10 9v3M13 9v3" stroke="#d8b050" strokeWidth="1.500" />
                    </svg>
                    ChipTuningPRO ver.7.2018.11.2289 - 10SW005072_PE PROTECT_PATCHED.bcf
                </Caption>
                <Controls>
                    <ControlButton $width={28} $first type="button" aria-label="Свернуть">
                        <svg width="12" height="5" viewBox="0 0 12 5" aria-hidden="true"><path d="M.500.500h11v3.500H.500z" fill="#fff" stroke="#445" /></svg>
                    </ControlButton>
                    <ControlButton $width={27} type="button" aria-label="Развернуть">
                        <svg width="12" height="12" viewBox="0 0 12 12" aria-hidden="true">
                            <path d="M4 1.500h7v7H9" fill="none" stroke="#fff" strokeWidth="1.500" />
                            <path d="M2 4h6v6H2z" fill="none" stroke="#fff" strokeWidth="2.200" />
                        </svg>
                    </ControlButton>
                    <ControlButton $width={46} $close type="button" aria-label="Закрыть">
                        <svg width="12" height="10" viewBox="0 0 12 10" aria-hidden="true"><path d="M1.500 1l9 8M10.500 1l-9 8" stroke="#fff" strokeWidth="2.800" /></svg>
                    </ControlButton>
                </Controls>
            </TitleBar>

            <Bars>
                <MenuBar>
                    <Grip $height={15} $gap={-1} />
                    {["Файл", "Правка", "Вид", "Команды", "ЭБУ", "Конфигурация", "Помощь"].map((item) => (
                        <MenuLink key={item} href="#">{item}</MenuLink>
                    ))}
                </MenuBar>
                <ToolBar>
                    <Grip $height={26} $gap={3} />
                    <Tool icon="open" label="Открыть" />
                    <ToolButton type="button" $narrow aria-label="Последние файлы"><Caret /></ToolButton>
                    <Tool icon="save" label="Сохранить" />
                    <Tool icon="saveEdit" label="Сохранить как" />
                    <Tool icon="print" label="Печать" />
                    <ToolSeparator />
                    <Tool icon="copy" label="Копировать" />
                    <Tool icon="paste" label="Вставить" />
                    <Tool icon="undo" label="Отменить" />
                    <ToolSeparator />
                    <Tool icon="chartSearch" label="Сравнить" />
                    <ToolButton type="button" $narrow aria-label="Варианты"><Caret /></ToolButton>
                    <Tool icon="info" label="Информация" />
                    <Tool icon="binary" label="Поиск" />
                    <ToolSeparator />
                    <Tool icon="tools" label="Настройки" />
                    <Tool icon="globe" label="Сеть" />
                    <Tool icon="help" label="Справка" />
                    <ToolEnd type="button" aria-label="Ещё">
                        <svg width="6" height="7" viewBox="0 0 6 7" aria-hidden="true"><path d="M0 0h6v1.500H0zM0 3h6L3 6.500z" fill="#fff" /></svg>
                    </ToolEnd>
                </ToolBar>
            </Bars>

            <Main>
                <SideStrip>
                    <SideTab type="button" $active>Меню калибровок</SideTab>
                    <SideTab type="button">Комментарии</SideTab>
                </SideStrip>
                <LeftPane>
                    <FilterTabs>
                        <FilterTab type="button" $width={42} $active>Все</FilterTab>
                        <FilterTab type="button" $width={47}>Фильтр</FilterTab>
                    </FilterTabs>
                    <TreePanel>
                        <CalibrationTree />
                        <HScroll>
                            <svg width="5" height="8" viewBox="0 0 5 8" aria-hidden="true"><path d="M5 0v8L0 4z" fill="#333" /></svg>
                            <ScrollThumb>
                                <svg width="8" height="7" viewBox="0 0 8 7" aria-hidden="true"><path d="M1 0v7M4 0v7M7 0v7" stroke="#555" /></svg>
                            </ScrollThumb>
                            <svg width="5" height="8" viewBox="0 0 5 8" aria-hidden="true"><path d="M0 0v8l5-4z" fill="#333" /></svg>
                        </HScroll>
                        <SearchRow>
                            <SearchLabel htmlFor="search">Поиск калибровки</SearchLabel>
                            <SearchInput id="search" type="text" />
                            <SearchButton type="button" aria-label="Найти">
                                <svg width="15" height="15" viewBox="0 0 15 15" fill="none" stroke="#999" aria-hidden="true">
                                    <path d="M2.500 1.500h9v12h-9z" />
                                    <circle cx="7" cy="6.500" r="3.500" strokeWidth="1.500" />
                                    <path d="M9.500 9.500l4 4" strokeWidth="2" />
                                </svg>
                            </SearchButton>
                        </SearchRow>
                    </TreePanel>
                </LeftPane>
                <RightPane>
                    <PageTabs>
                        <PageTab type="button" $active>Поверхность</PageTab>
                        <PageTab type="button">Таблица</PageTab>
                        <PageTab type="button">Ось X - индивидуальная</PageTab>
                        <PageTab type="button">Ось Z - индивидуальная</PageTab>
                    </PageTabs>
                    <Page>
                        <SurfaceChart />
                        <BottomPanels />
                    </Page>
                </RightPane>
            </Main>

            <StatusBar>
                <StatusCell $width={202} $pad={4}>Bosch ME17.9.71 UAZ</StatusCell>
                <StatusCell $width={150} $pad={1}>10SW005072_AP_v1</StatusCell>
            </StatusBar>
        </Window>
    );
}
